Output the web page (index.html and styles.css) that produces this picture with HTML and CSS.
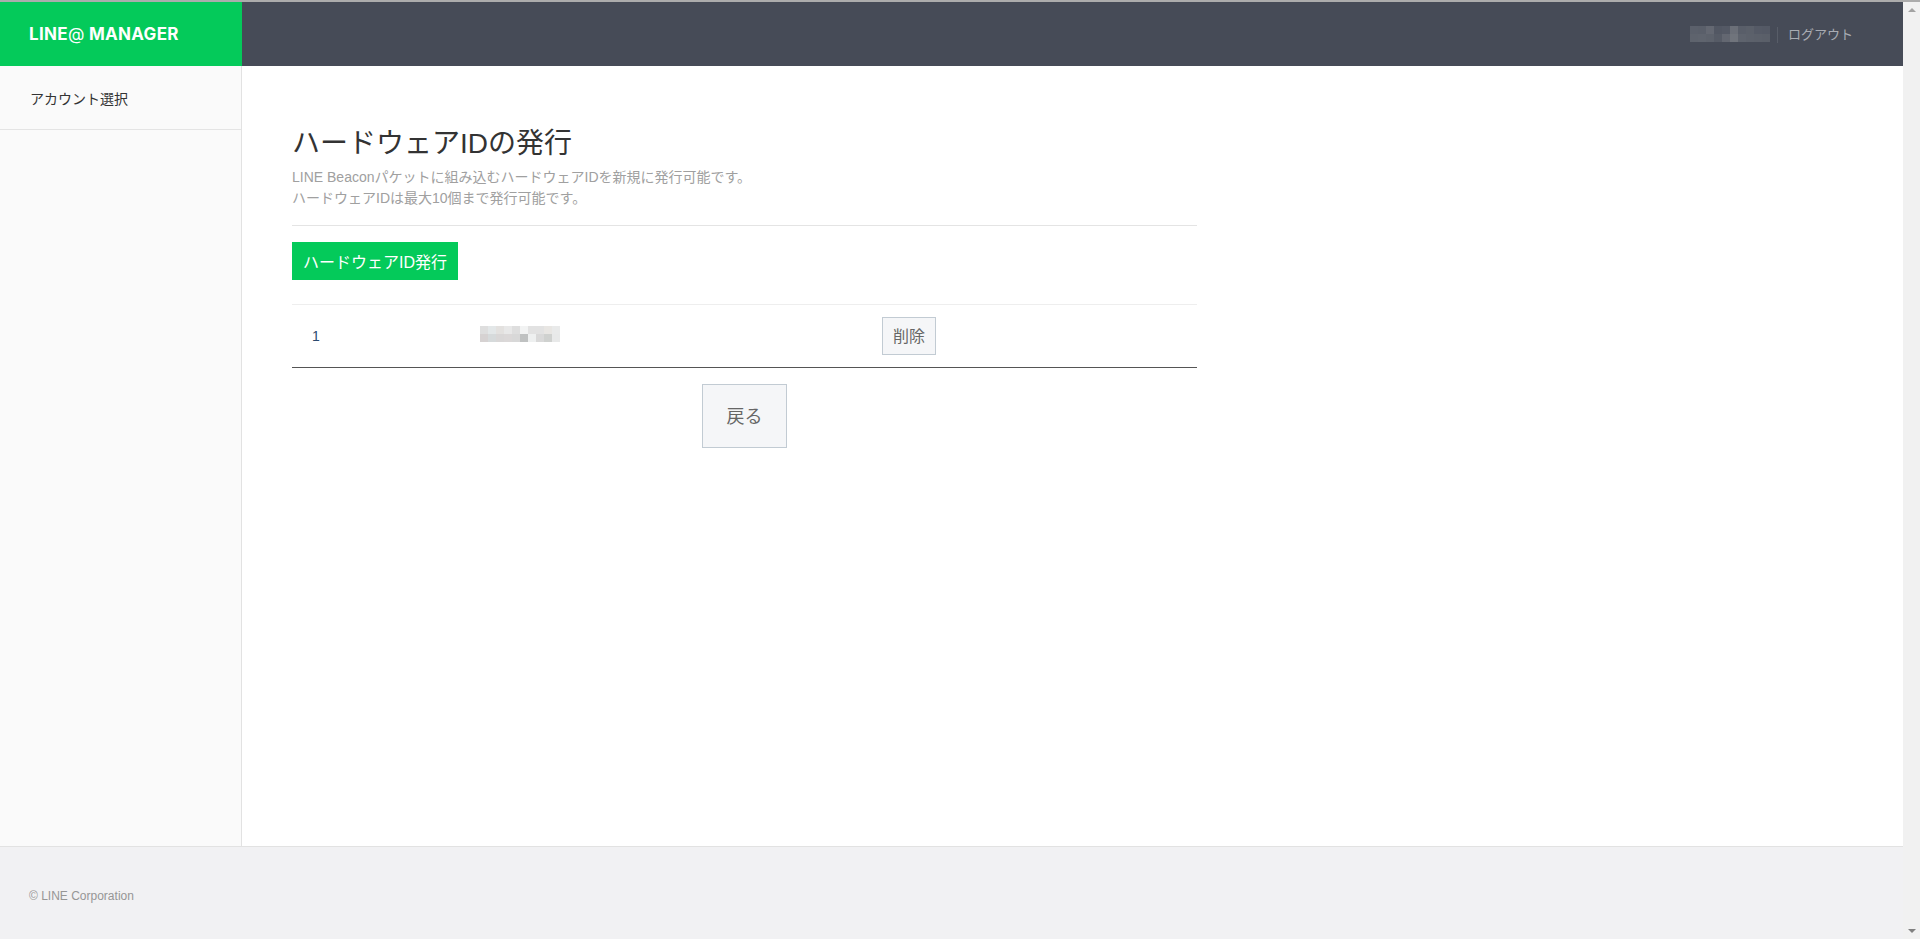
FILE: index.html
```html
<!DOCTYPE html>
<html lang="ja">
<head>
<meta charset="utf-8">
<title>LINE@ MANAGER</title>
<link rel="stylesheet" href="styles.css">
</head>
<body>
<div class="window">
  <div class="viewport">
    <header class="topbar">
      <div class="brand">LINE<span class="brand-at">@</span> MANAGER</div>
      <div class="account">
        <svg class="mosaic" width="80" height="16" viewBox="0 0 10 2" shape-rendering="crispEdges" aria-hidden="true">
          <rect x="0" y="0" width="1" height="1" fill="#5b606b"/><rect x="1" y="0" width="1" height="1" fill="#5a5f6a"/><rect x="2" y="0" width="1" height="1" fill="#646872"/><rect x="3" y="0" width="1" height="1" fill="#525763"/><rect x="4" y="0" width="1" height="1" fill="#545965"/><rect x="5" y="0" width="1" height="1" fill="#6b6f78"/><rect x="6" y="0" width="1" height="1" fill="#595e69"/><rect x="7" y="0" width="1" height="1" fill="#5b606a"/><rect x="8" y="0" width="1" height="1" fill="#555a66"/><rect x="9" y="0" width="1" height="1" fill="#545965"/>
          <rect x="0" y="1" width="1" height="1" fill="#5e636d"/><rect x="1" y="1" width="1" height="1" fill="#5f646e"/><rect x="2" y="1" width="1" height="1" fill="#5d626c"/><rect x="3" y="1" width="1" height="1" fill="#565b66"/><rect x="4" y="1" width="1" height="1" fill="#636771"/><rect x="5" y="1" width="1" height="1" fill="#70747c"/><rect x="6" y="1" width="1" height="1" fill="#5e636d"/><rect x="7" y="1" width="1" height="1" fill="#5c616b"/><rect x="8" y="1" width="1" height="1" fill="#5b606a"/><rect x="9" y="1" width="1" height="1" fill="#5a5f69"/>
        </svg>
        <a class="logout">ログアウト</a>
      </div>
    </header>
    <div class="middle">
      <nav class="sidebar">
        <div class="side-item">アカウント選択</div>
      </nav>
      <main class="content">
        <div class="panel">
          <h1 class="title">ハードウェアIDの発行</h1>
          <p class="desc">LINE Beaconパケットに組み込むハードウェアIDを新規に発行可能です。<br>ハードウェアIDは最大10個まで発行可能です。</p>
          <div class="actions">
            <button class="btn-primary" type="button">ハードウェアID発行</button>
          </div>
          <div class="row">
            <div class="cell-num">1</div>
            <div class="cell-id">
              <svg class="mosaic" width="80" height="16" viewBox="0 0 10 2" shape-rendering="crispEdges" aria-hidden="true">
                <rect x="0" y="0" width="1" height="1" fill="#dedede"/><rect x="1" y="0" width="1" height="1" fill="#e3e7e8"/><rect x="2" y="0" width="1" height="1" fill="#e3e1df"/><rect x="3" y="0" width="1" height="1" fill="#e8e8e8"/><rect x="4" y="0" width="1" height="1" fill="#dedede"/><rect x="5" y="0" width="1" height="1" fill="#f2f3f3"/><rect x="6" y="0" width="1" height="1" fill="#e2e2e2"/><rect x="7" y="0" width="1" height="1" fill="#e2e2e2"/><rect x="8" y="0" width="1" height="1" fill="#e8e6e3"/><rect x="9" y="0" width="1" height="1" fill="#e9eaea"/>
                <rect x="0" y="1" width="1" height="1" fill="#d6d2d2"/><rect x="1" y="1" width="1" height="1" fill="#d6dadb"/><rect x="2" y="1" width="1" height="1" fill="#d9d7d7"/><rect x="3" y="1" width="1" height="1" fill="#dbd8d8"/><rect x="4" y="1" width="1" height="1" fill="#d8d8d8"/><rect x="5" y="1" width="1" height="1" fill="#bfc1c1"/><rect x="6" y="1" width="1" height="1" fill="#eef0f0"/><rect x="7" y="1" width="1" height="1" fill="#d9d9d9"/><rect x="8" y="1" width="1" height="1" fill="#cfd1cf"/><rect x="9" y="1" width="1" height="1" fill="#e8e9e9"/>
              </svg>
            </div>
            <div class="cell-action"><button class="btn-small" type="button">削除</button></div>
          </div>
          <div class="back-wrap">
            <button class="btn-back" type="button">戻る</button>
          </div>
        </div>
      </main>
    </div>
    <footer class="footer">© LINE Corporation</footer>
  </div>
  <div class="scrollbar">
    <span class="arrow-up"></span>
    <span class="arrow-down"></span>
  </div>
</div>
</body>
</html>
```

FILE: styles.css
```css
* { box-sizing: border-box; }
html, body { margin: 0; height: 100%; overflow: hidden; }
body {
  font-family: "Liberation Sans", "Noto Sans CJK JP", sans-serif;
  font-size: 14px;
  color: #333;
  background: #fff;
}
.window {
  display: flex;
  height: 939px;
  border-top: 2px solid #acacac;
}
.viewport {
  flex: 1;
  display: flex;
  flex-direction: column;
  min-width: 0;
}
.topbar {
  height: 64px;
  flex: none;
  display: flex;
  justify-content: space-between;
  align-items: center;
  background: #464b57;
}
.brand {
  width: 242px;
  height: 100%;
  padding-left: 29px;
  display: flex;
  align-items: center;
  white-space: pre;
  background: #04ca5a;
  color: #fff;
  font-family: Inter, sans-serif;
  font-weight: 700;
  font-size: 17px;
  letter-spacing: 0.3px;
}
.brand-at { font-weight: 400; }
.account {
  display: flex;
  align-items: center;
  padding-right: 50px;
}
.mosaic { display: block; }
.logout {
  margin-left: 7px;
  margin-top: 1px;
  padding-left: 10px;
  border-left: 1px solid #585d68;
  line-height: 16px;
  font-size: 13px;
  color: #a9acb3;
}
.middle {
  flex: 1;
  display: flex;
  min-height: 0;
}
.sidebar {
  width: 242px;
  flex: none;
  background: #fafafa;
  border-right: 1px solid #e2e2e2;
}
.side-item {
  height: 64px;
  padding-left: 30px;
  display: flex;
  align-items: center;
  font-size: 14px;
  color: #333;
  border-bottom: 1px solid #e4e4e4;
}
.content {
  flex: 1;
  min-width: 0;
  padding: 58px 50px 0;
}
.panel { width: 905px; }
.title {
  margin: 0;
  font-size: 28px;
  font-weight: 400;
  line-height: 40px;
  color: #333;
}
.desc {
  margin: 0;
  padding: 3px 0 16px;
  font-size: 14px;
  line-height: 21px;
  color: #a0a0a0;
  border-bottom: 1px solid #e4e4e4;
}
.actions {
  padding: 16px 0 24px;
  border-bottom: 1px solid #eeeeee;
}
.btn-primary {
  display: block;
  width: 166px;
  height: 38px;
  padding: 0 0 1px;
  border: 0;
  background: #04ca5a;
  color: #fff;
  font: inherit;
  font-size: 16px;
}
.row {
  height: 63px;
  display: grid;
  grid-template-columns: 188px 402px 1fr;
  align-items: center;
  border-bottom: 1px solid #555;
}
.cell-num {
  padding-left: 20px;
  font-size: 14px;
  color: #2c4a6e;
}
.cell-id { padding-bottom: 4px; }
.btn-small {
  display: block;
  width: 54px;
  height: 38px;
  padding: 0 0 2px;
  border: 1px solid #c2cbd3;
  background: #f5f6f8;
  color: #666;
  font: inherit;
  font-size: 16px;
}
.back-wrap {
  display: flex;
  justify-content: center;
  padding-top: 16px;
}
.btn-back {
  width: 85px;
  height: 64px;
  padding: 0 0 3px;
  border: 1px solid #c2cbd3;
  background: #f5f6f8;
  color: #666;
  font: inherit;
  font-size: 18px;
}
.footer {
  height: 93px;
  flex: none;
  padding: 41px 0 0 29px;
  font-size: 12px;
  line-height: 16px;
  color: #969696;
  background: #f1f1f3;
  border-top: 1px solid #e2e2e2;
}
.scrollbar {
  width: 17px;
  flex: none;
  background: #f1f1f1;
  display: flex;
  flex-direction: column;
  justify-content: space-between;
  align-items: center;
  padding: 6px 0;
}
.arrow-up, .arrow-down {
  width: 0;
  height: 0;
  border-left: 4px solid transparent;
  border-right: 4px solid transparent;
}
.arrow-up { border-bottom: 4px solid #a3a3a3; }
.arrow-down { border-top: 4px solid #808080; }
```
